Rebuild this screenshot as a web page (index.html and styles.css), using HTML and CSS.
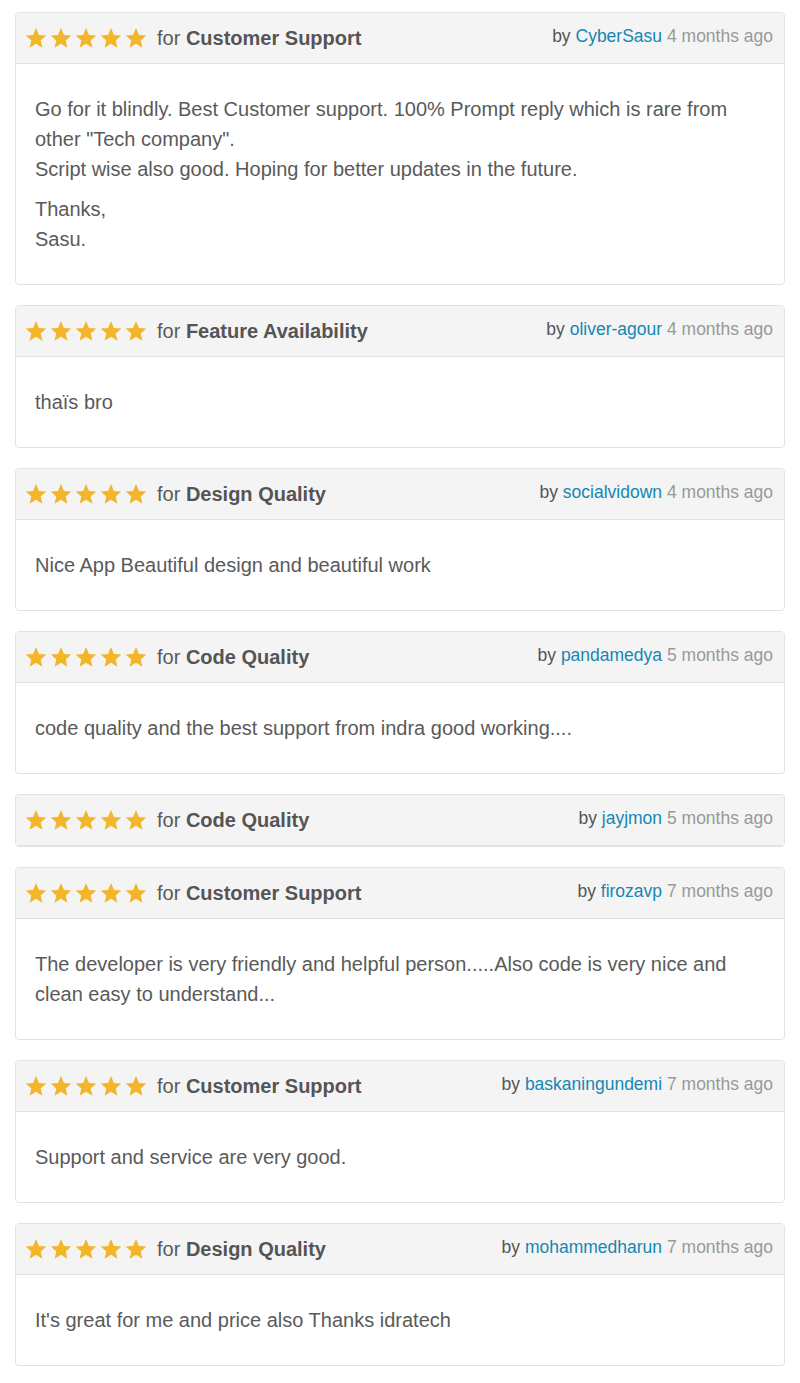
FILE: index.html
```html
<!DOCTYPE html>
<html lang="en">
<head>
  <meta charset="UTF-8">
  <title>Reviews</title>
  <link rel="stylesheet" href="styles.css">
</head>
<body>

  <svg width="0" height="0" class="defs">
    <symbol id="star" viewBox="0 0 24 24">
      <path d="M12 1.2l3.2 7.4 8 .7-6.1 5.3 1.9 7.9L12 18.3l-7 4.2 1.9-7.9L.8 9.3l8-.7z"/>
    </symbol>
  </svg>

  <div class="reviews" id="reviews"></div>

  <script>
    const reviews = [
      { topic: 'Customer Support', user: 'CyberSasu', when: '4 months ago',
        body: ['Go for it blindly. Best Customer support. 100% Prompt reply which is rare from other "Tech company".<br>Script wise also good. Hoping for better updates in the future.', 'Thanks,<br>Sasu.'] },
      { topic: 'Feature Availability', user: 'oliver-agour', when: '4 months ago', body: ['thaïs bro'] },
      { topic: 'Design Quality', user: 'socialvidown', when: '4 months ago', body: ['Nice App Beautiful design and beautiful work'] },
      { topic: 'Code Quality', user: 'pandamedya', when: '5 months ago', body: ['code quality and the best support from indra good working....'] },
      { topic: 'Code Quality', user: 'jayjmon', when: '5 months ago', body: [] },
      { topic: 'Customer Support', user: 'firozavp', when: '7 months ago',
        body: ['The developer is very friendly and helpful person.....Also code is very nice and clean easy to understand...'] },
      { topic: 'Customer Support', user: 'baskaningundemi', when: '7 months ago', body: ['Support and service are very good.'] },
      { topic: 'Design Quality', user: 'mohammedharun', when: '7 months ago', body: ["It's great for me and price also Thanks idratech"] }
    ];

    const list = document.getElementById('reviews');
    const star = '<svg class="star"><use href="#star"/></svg>';

    reviews.forEach(r => {
      const card = document.createElement('div');
      card.classList.add('review');

      let html = `
        <div class="review-head">
          <div class="rating">
            <span class="stars">${star.repeat(5)}</span>
            <span class="for">for <strong>${r.topic}</strong></span>
          </div>
          <div class="meta">by <a href="#">${r.user}</a> <span class="when">${r.when}</span></div>
        </div>`;

      if (r.body.length) {
        html += '<div class="review-body">' + r.body.map(p => `<p>${p}</p>`).join('') + '</div>';
      }

      card.innerHTML = html;
      list.appendChild(card);
    });
  </script>

</body>
</html>
```

FILE: styles.css
```css
body {
  font-family: "Liberation Sans", Arial, sans-serif;
  margin: 0;
  padding: 12px 15px;
  background-color: #fff;
  color: #555;
}

.defs {
  position: absolute;
}

.reviews {
  display: flex;
  flex-direction: column;
  gap: 20px;
}

.review {
  border: 1px solid #e2e2e2;
  border-radius: 4px;
  overflow: hidden;
}

.review-head {
  display: flex;
  justify-content: space-between;
  align-items: flex-start;
  height: 50px;
  padding: 0 11px 0 9px;
  background-color: #f4f4f4;
  border-bottom: 1px solid #e2e2e2;
}

.rating {
  display: flex;
  align-items: center;
  height: 50px;
}

.stars {
  display: flex;
  gap: 3px;
  margin-right: 10px;
}

.star {
  width: 22px;
  height: 22px;
  fill: #f3b52a;
}

.for {
  font-size: 20px;
  color: #5a5a5a;
}

.for strong {
  color: #555;
}

.meta {
  font-size: 17.5px;
  line-height: 20px;
  padding-top: 13px;
  color: #555;
}

.meta a {
  color: #1487b3;
  text-decoration: none;
}

.when {
  color: #999;
}

.review-body {
  padding: 30px 19px;
  font-size: 20px;
  line-height: 30px;
  color: #5a5a5a;
}

.review-body p {
  margin: 0;
}

.review-body p + p {
  margin-top: 10px;
}
```
